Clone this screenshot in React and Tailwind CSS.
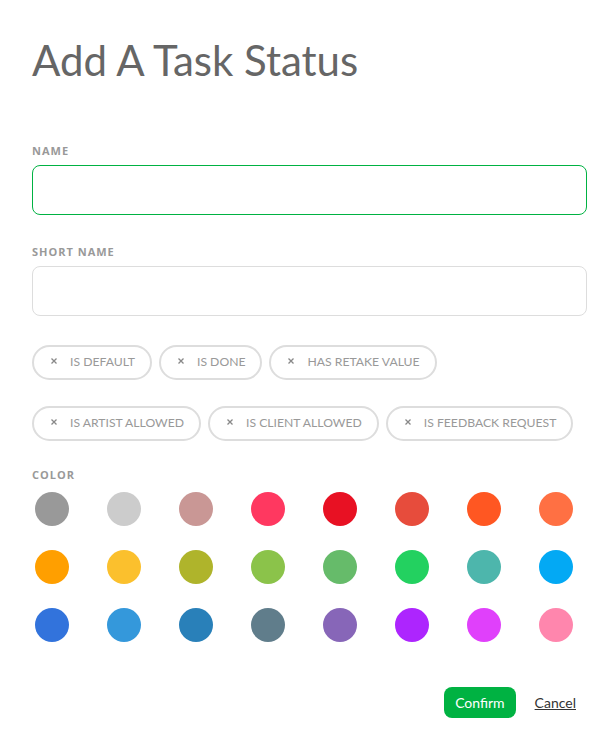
import React from "react";

const colors = [
  "#999999", "#cccccc", "#c99795", "#ff3860", "#e81123", "#e74c3c", "#ff5722", "#ff7043",
  "#ff9f00", "#fbc02d", "#afb42b", "#8bc34a", "#66bb6a", "#23d160", "#4db6ac", "#03a9f4",
  "#3273dc", "#3498db", "#2980b9", "#607d8b", "#8766b8", "#ad25fe", "#e040fb", "#ff86ad",
];

function Tag({ label }) {
  return (
    <div className="flex h-[35px] items-center whitespace-nowrap rounded-full border-2 border-[#dddddd] pl-[17px] pr-[15px] text-[12.2px] text-[#999999]" style={{ fontFamily: "Lato, sans-serif" }}>
      <svg width="6" height="6" viewBox="0 0 6 6" className="mr-[13px] mb-[3px]">
        <path d="M0.5 0.5L5.5 5.5M5.5 0.5L0.5 5.5" stroke="#888888" strokeWidth="1.3" />
      </svg>
      <span>{label}</span>
    </div>
  );
}

export default function App() {
  return (
    <div className="min-h-[752px] w-[616px] bg-white px-[32px] pt-[35px]" style={{ fontFamily: "'Open Sans', 'Noto Sans', sans-serif" }}>
      <h1 className="text-[42px] leading-[50px] text-[#666666]" style={{ fontFamily: "Lato, sans-serif" }}>
        Add A Task Status
      </h1>
      <div className="mt-[58px] w-[555px]">
        <label className="block text-[11px] font-bold uppercase leading-[15px] tracking-[1px] text-[#999999]">Name</label>
        <div className="mt-[7px] h-[50px] rounded-[8px] border border-[#00b242]" />
        <label className="mt-[29px] block text-[11px] font-bold uppercase leading-[15px] tracking-[1px] text-[#999999]">Short name</label>
        <div className="mt-[7px] h-[50px] rounded-[8px] border border-[#dddddd]" />
        <div className="mt-[29px] flex gap-[7px]">
          <Tag label="IS DEFAULT" />
          <Tag label="IS DONE" />
          <Tag label="HAS RETAKE VALUE" />
        </div>
        <div className="mt-[26px] flex gap-[7px]">
          <Tag label="IS ARTIST ALLOWED" />
          <Tag label="IS CLIENT ALLOWED" />
          <Tag label="IS FEEDBACK REQUEST" />
        </div>
        <label className="mt-[26px] block text-[11px] font-bold uppercase leading-[15px] tracking-[1px] text-[#999999]">Color</label>
        <div className="mt-[10px] grid grid-cols-[repeat(8,72px)] gap-y-[24px] pl-[3px]">
          {colors.map((c) => (
            <div key={c} className="h-[34px] w-[34px] rounded-full" style={{ backgroundColor: c }} />
          ))}
        </div>
        <div className="mt-[45px] flex items-center justify-end gap-[19px] pr-[11px]" style={{ fontFamily: "Lato, sans-serif" }}>
          <button className="h-[31px] rounded-[8px] bg-[#00b242] px-[11px] text-[14px] text-white">Confirm</button>
          <button className="text-[14px] text-[#333333] underline">Cancel</button>
        </div>
      </div>
    </div>
  );
}
